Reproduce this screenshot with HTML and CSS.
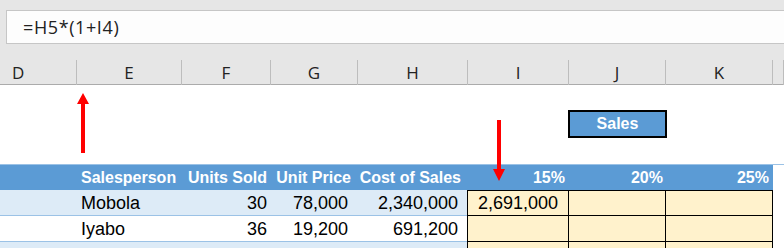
FILE: index.html
```html
<!DOCTYPE html>
<html lang="en">
<head>
  <meta charset="UTF-8" />
  <title>Sales growth</title>
  <link rel="stylesheet" href="styles.css">
</head>
<body>
  <div class="chrome">
    <div class="formula-bar">=H5*(1+I4)</div>
    <div class="col-heads">
      <div class="col-head">D</div>
      <div class="col-head">E</div>
      <div class="col-head">F</div>
      <div class="col-head">G</div>
      <div class="col-head">H</div>
      <div class="col-head">I</div>
      <div class="col-head">J</div>
      <div class="col-head">K</div>
      <div class="col-head"></div>
    </div>
  </div>

  <div class="sheet">
    <!-- blank rows above the table -->
    <div class="row blank"></div>
    <div class="row blank">
      <div class="cell"></div><div class="cell"></div><div class="cell"></div><div class="cell"></div>
      <div class="cell"></div><div class="cell"></div>
      <div class="cell sales-box">Sales</div>
    </div>
    <div class="row blank"></div>

    <div class="row head">
      <div class="cell"></div>
      <div class="cell">Salesperson</div>
      <div class="cell right pad-s">Units Sold</div>
      <div class="cell right pad-m">Unit Price</div>
      <div class="cell right pad-m">Cost of Sales</div>
      <div class="cell right pad-s">15%</div>
      <div class="cell right pad-xs">20%</div>
      <div class="cell right pad-s">25%</div>
      <div class="cell off"></div>
    </div>

    <div class="row data band">
      <div class="cell"></div>
      <div class="cell">Mobola</div>
      <div class="cell right pad-s">30</div>
      <div class="cell right num">78,000</div>
      <div class="cell right num">2,340,000</div>
      <div class="cell calc first right num">2,691,000</div>
      <div class="cell calc"></div>
      <div class="cell calc"></div>
      <div class="cell off"></div>
    </div>

    <div class="row data">
      <div class="cell"></div>
      <div class="cell">Iyabo</div>
      <div class="cell right pad-s">36</div>
      <div class="cell right num">19,200</div>
      <div class="cell right num">691,200</div>
      <div class="cell calc first"></div>
      <div class="cell calc"></div>
      <div class="cell calc"></div>
      <div class="cell off"></div>
    </div>

    <div class="row data band">
      <div class="cell"></div>
      <div class="cell"></div>
      <div class="cell"></div>
      <div class="cell"></div>
      <div class="cell"></div>
      <div class="cell calc first"></div>
      <div class="cell calc"></div>
      <div class="cell calc"></div>
      <div class="cell off"></div>
    </div>

    <svg class="arrow arrow-up" width="14" height="62" viewBox="0 0 14 62">
      <polygon points="7,0 13,11 9,11 9,60 5,60 5,11 1,11" fill="#ff0000"/>
    </svg>
    <svg class="arrow arrow-down" width="14" height="62" viewBox="0 0 14 62">
      <polygon points="5,0 9,0 9,49 13,49 7,61 1,49 5,49" fill="#ff0000"/>
    </svg>
  </div>
</body>
</html>
```

FILE: styles.css
```css
* {
  box-sizing: border-box;
}

body {
  margin: 0;
  font-family: 'Liberation Sans', Arial, sans-serif;
  color: #000;
  background: #fff;
  width: 784px;
  height: 248px;
  overflow: hidden;
}

.chrome {
  background: #e6e6e6;
  padding-top: 10px;
}

.formula-bar {
  margin-left: 6px;
  height: 34px;
  border: 1px solid #c6c6c6;
  border-right: none;
  background: #fdfdfd;
  padding-left: 16px;
  font-family: 'Open Sans', sans-serif;
  font-size: 18px;
  letter-spacing: 0.6px;
  line-height: 32px;
  color: #222;
}

.col-heads,
.row {
  display: grid;
  grid-template-columns: 77px 105px 89px 87px 110px 101px 97px 107px 1fr;
}

.col-heads {
  margin-top: 16px;
  height: 25px;
  border-bottom: 1px solid #ababab;
}

.col-head {
  border-right: 1px solid #bdbdbd;
  text-align: center;
  font-family: 'Open Sans', sans-serif;
  font-size: 17px;
  line-height: 24px;
  color: #222;
  padding-top: 1px;
}

.col-head:first-child {
  text-align: left;
  padding-left: 12px;
}

.sheet {
  position: relative;
  padding-top: 1px;
}

.row {
  height: 26px;
}

.cell {
  display: flex;
  align-items: center;
  padding: 2px 4px 0;
  font-size: 18px;
  white-space: nowrap;
  overflow: hidden;
}

.right { justify-content: flex-end; }
.pad-xs { padding-right: 3px; }
.pad-s { padding-right: 4px; }
.pad-m { padding-right: 7px; }
.num { padding-right: 10px; }

.sales-box {
  justify-content: center;
  margin: -2px -1px 0;
  height: 28px;
  border: 2px solid #000;
  background: #5b9bd5;
  color: #fff;
  font-weight: bold;
  font-size: 16px;
  padding: 0;
}

.head {
  background: #5b9bd5;
  border-top: 1px solid #9bc2e6;
}

.head .cell {
  color: #fff;
  font-weight: bold;
  font-size: 16px;
  padding-top: 1px;
}

.head .off {
  background: #fff;
}

.data .cell {
  border-bottom: 1px solid #9bc2e6;
}

.data.band .cell {
  background: #ddebf7;
}

.data .cell.calc {
  background: #fff2cc;
  border-bottom: 1px solid #000;
  border-right: 1px solid #000;
}

.data .cell.first {
  border-left: 1px solid #000;
  margin-left: -1px;
}

.head + .data .calc {
  border-top: 1px solid #000;
  padding-top: 1px;
}

.data .cell.off {
  background: #fff;
  border-bottom: none;
}

.arrow {
  position: absolute;
}

.arrow-up {
  left: 76px;
  top: 8px;
}

.arrow-down {
  left: 492px;
  top: 35px;
}
```
